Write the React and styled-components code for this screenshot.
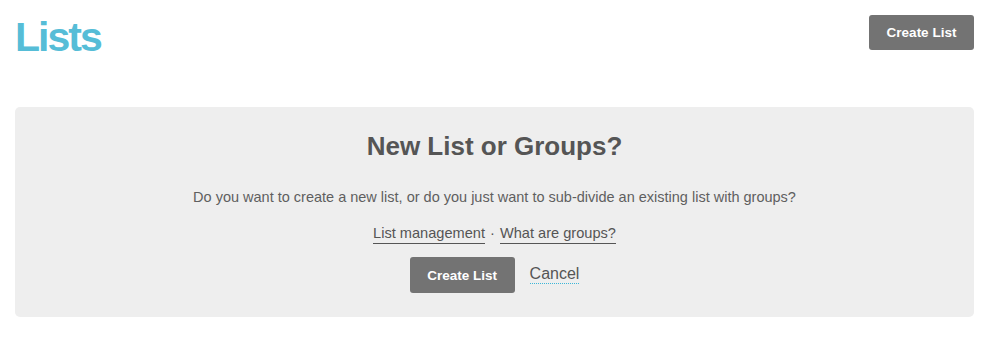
import React from "react";
import styled, { createGlobalStyle } from "styled-components";

const Global = createGlobalStyle`
  html, body { margin: 0; padding: 0; background: #fff; }
  body { font-family: "Liberation Sans", Arial, sans-serif; color: #555; }
`;

const Page = styled.div`
  padding: 15px 15px 0 15px;
`;

const Header = styled.div`
  display: flex;
  justify-content: space-between;
  align-items: flex-start;
`;

const Title = styled.h1`
  margin: 0;
  font-size: 41px;
  line-height: 44px;
  font-weight: bold;
  color: #56bdd7;
  letter-spacing: -2px;
`;

const Button = styled.button`
  background: #737373;
  color: #fff;
  border: none;
  border-radius: 3px;
  font-family: "Liberation Sans", Arial, sans-serif;
  font-weight: bold;
  font-size: 13.5px;
  width: 105px;
  height: ${(p) => (p.$tall ? 36 : 35)}px;
  padding: 0;
  cursor: pointer;
`;

const Panel = styled.div`
  margin-top: 48px;
  background: #eeeeee;
  border-radius: 5px;
  height: 210px;
  box-sizing: border-box;
  padding-top: 24px;
  display: flex;
  flex-direction: column;
  align-items: center;
`;

const PanelTitle = styled.h2`
  margin: 0;
  font-size: 26px;
  line-height: 30px;
  font-weight: bold;
  color: #555;
`;

const Text = styled.p`
  margin: 27px 0 0;
  font-size: 14.5px;
  line-height: 18px;
  color: #5f5f5f;
`;

const Links = styled.div`
  margin-top: 18px;
  font-size: 14.6px;
  line-height: 18px;
  color: #555;
  display: flex;
  gap: 5px;
  align-items: baseline;
`;

const Link = styled.a`
  color: #555;
  text-decoration: none;
  border-bottom: 1px solid #555;
  padding-bottom: 1px;
`;

const Actions = styled.div`
  margin-top: 13px;
  display: flex;
  align-items: center;
  gap: 15px;
`;

const Cancel = styled.a`
  font-size: 16px;
  line-height: 18px;
  color: #555;
  text-decoration: none;
  border-bottom: 1px dotted #3bb6d8;
  margin-top: -2px;
`;

export default function App() {
  return (
    <>
      <Global />
      <Page>
        <Header>
          <Title>Lists</Title>
          <Button>Create List</Button>
        </Header>
        <Panel>
          <PanelTitle>New List or Groups?</PanelTitle>
          <Text>
            Do you want to create a new list, or do you just want to sub-divide an existing list with groups?
          </Text>
          <Links>
            <Link href="#">List management</Link>
            <span>·</span>
            <Link href="#">What are groups?</Link>
          </Links>
          <Actions>
            <Button $tall>Create List</Button>
            <Cancel href="#">Cancel</Cancel>
          </Actions>
        </Panel>
      </Page>
    </>
  );
}
